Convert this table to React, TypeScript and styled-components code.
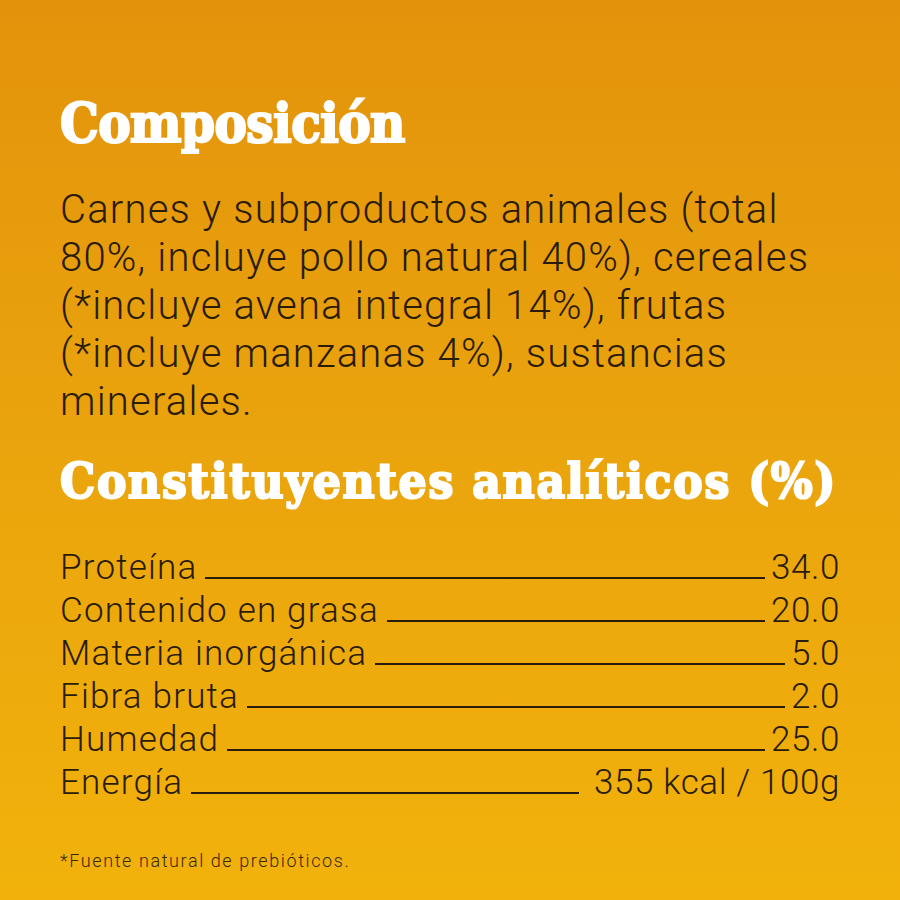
import React from "react";
import styled, { createGlobalStyle } from "styled-components";

const Global = createGlobalStyle`
  html, body { margin: 0; padding: 0; }
  body { width: 900px; height: 900px; overflow: hidden; }
`;

const Page = styled.main`
  box-sizing: border-box;
  width: 900px;
  height: 900px;
  padding: 93px 60px 0 60px;
  background: linear-gradient(180deg, #e3930b 0%, #eaa40d 50%, #f2b20b 100%);
  color: #2a1c0c;
  font-family: Roboto, "Liberation Sans", sans-serif;
  font-weight: 300;
`;

const Heading = styled.h2<{ $size: number; $line: number; $mt: number; $track: number }>`
  margin: ${(p) => p.$mt}px 0 0 0;
  font-family: "DejaVu Serif", "Liberation Serif", serif;
  font-stretch: condensed;
  font-weight: 900;
  font-size: ${(p) => p.$size}px;
  line-height: ${(p) => p.$line}px;
  letter-spacing: ${(p) => p.$track}px;
  color: #ffffff;
  -webkit-text-stroke: 2.2px #ffffff;
  white-space: nowrap;
`;

const Body = styled.p`
  margin: 33px 0 0 0;
  font-size: 40px;
  line-height: 48px;
  letter-spacing: 1.2px;
  white-space: nowrap;
`;

const Table = styled.div`
  margin-top: 39px;
  display: flex;
  flex-direction: column;
`;

const Row = styled.div`
  display: flex;
  align-items: baseline;
  font-size: 35px;
  line-height: 43px;
  letter-spacing: 1.2px;
  white-space: nowrap;
`;

const Leader = styled.span<{ $gapRight: number }>`
  flex: 1;
  height: 2px;
  background: #2a1c0c;
  margin: 0 ${(p) => p.$gapRight}px 0 8px;
`;

const Value = styled.span`
  letter-spacing: 0.6px;
`;

const Footnote = styled.p`
  margin: 46px 0 0 0;
  font-size: 18px;
  line-height: 22px;
  letter-spacing: 1.6px;
  color: #3a2810;
`;

const rows: { label: string; value: string; gap?: number }[] = [
  { label: "Proteína", value: "34.0" },
  { label: "Contenido en grasa", value: "20.0" },
  { label: "Materia inorgánica", value: "5.0" },
  { label: "Fibra bruta", value: "2.0" },
  { label: "Humedad", value: "25.0" },
  { label: "Energía", value: "355 kcal / 100g", gap: 15 },
];

export default function App() {
  return (
    <Page>
      <Global />
      <Heading $size={54} $line={60} $mt={0} $track={-0.5}>
        Composición
      </Heading>
      <Body>
        Carnes y subproductos animales (total
        <br />
        80%, incluye pollo natural 40%), cereales
        <br />
        (*incluye avena integral 14%), frutas
        <br />
        (*incluye manzanas 4%), sustancias
        <br />
        minerales.
      </Body>
      <Heading $size={49} $line={52} $mt={29} $track={1.8}>
        Constituyentes analíticos (%)
      </Heading>
      <Table>
        {rows.map((r) => (
          <Row key={r.label}>
            <span>{r.label}</span>
            <Leader $gapRight={r.gap ?? 6} />
            <Value>{r.value}</Value>
          </Row>
        ))}
      </Table>
      <Footnote>*Fuente natural de prebióticos.</Footnote>
    </Page>
  );
}
